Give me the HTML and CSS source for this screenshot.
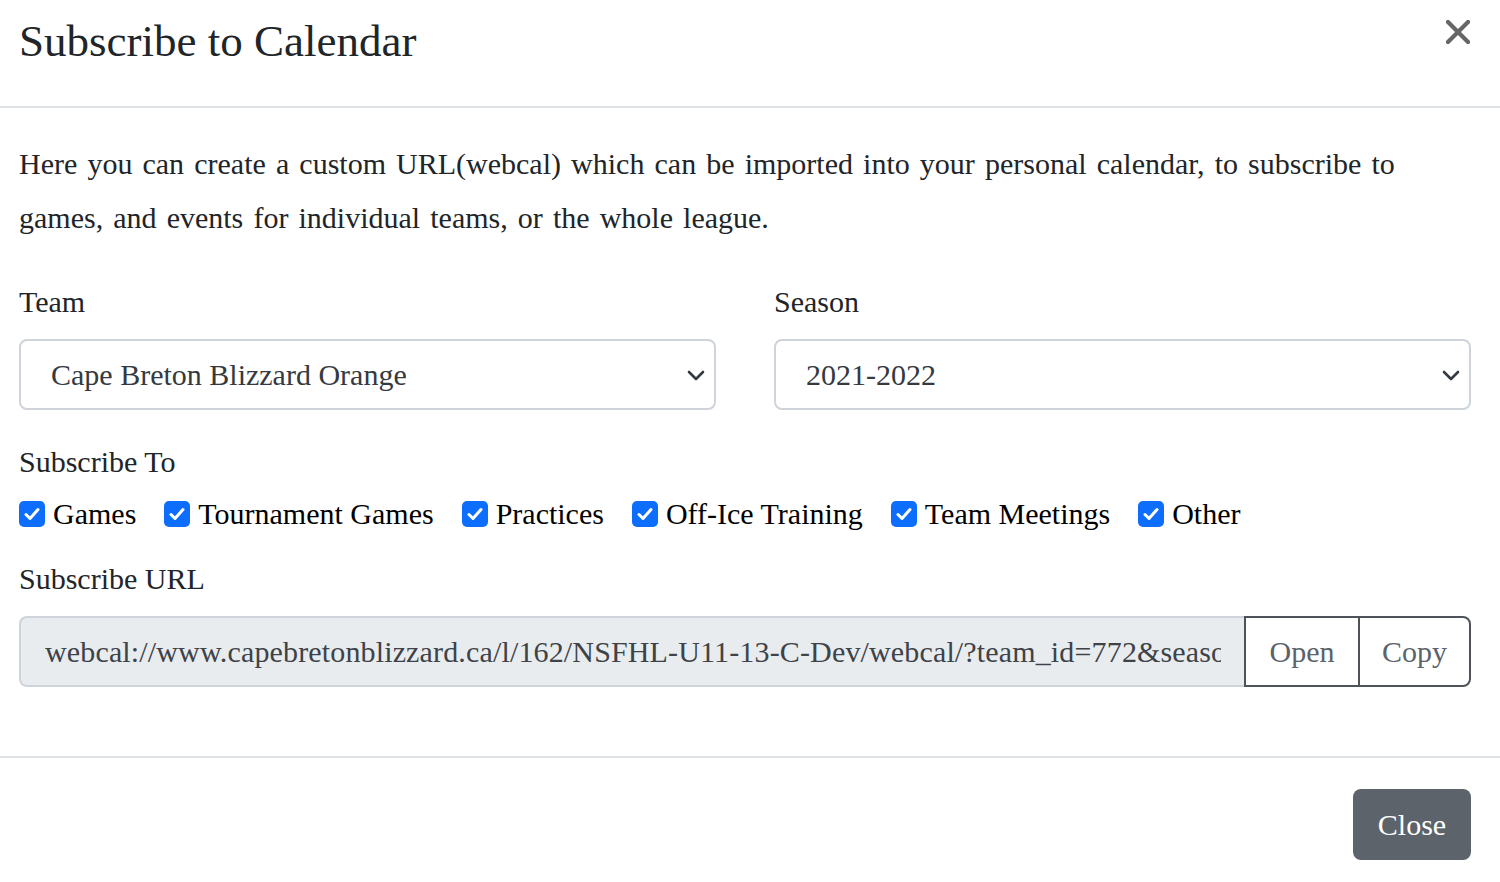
FILE: index.html
```html
<!DOCTYPE html>
<html lang="en">
<head>
    <meta charset="UTF-8">
    <title>Subscribe to Calendar</title>
    <link rel="stylesheet" href="styles.css">
</head>
<body>

    <div class="modal">
        <div class="modal-header">
            <h4 class="modal-title">Subscribe to Calendar</h4>
            <button class="btn-close" aria-label="Close">
                <svg width="24" height="24" viewBox="0 0 24 24">
                    <path d="M2 2 L22 22 M22 2 L2 22" stroke="#666" stroke-width="4.2" stroke-linecap="square"/>
                </svg>
            </button>
        </div>

        <div class="modal-body">
            <p class="intro">Here you can create a custom URL(webcal) which can be imported into your personal calendar, to subscribe to games, and events for individual teams, or the whole league.</p>

            <div class="row">
                <div class="field">
                    <label class="form-label">Team</label>
                    <div class="form-select">
                        <span>Cape Breton Blizzard Orange</span>
                        <svg class="chevron" width="18" height="11" viewBox="0 0 18 11">
                            <path d="M2 2 L9 9 L16 2" fill="none" stroke="#343a40" stroke-width="2.6" stroke-linecap="round" stroke-linejoin="round"/>
                        </svg>
                    </div>
                </div>
                <div class="field">
                    <label class="form-label">Season</label>
                    <div class="form-select">
                        <span>2021-2022</span>
                        <svg class="chevron" width="18" height="11" viewBox="0 0 18 11">
                            <path d="M2 2 L9 9 L16 2" fill="none" stroke="#343a40" stroke-width="2.6" stroke-linecap="round" stroke-linejoin="round"/>
                        </svg>
                    </div>
                </div>
            </div>

            <label class="form-label section-label">Subscribe To</label>
            <div class="checks">
                <label class="form-check"><span class="check-box"><svg width="26" height="26" viewBox="0 0 26 26"><path d="M7 13.5 L11 17.5 L19 8.5" fill="none" stroke="#fff" stroke-width="3" stroke-linecap="round" stroke-linejoin="round"/></svg></span>Games</label>
                <label class="form-check"><span class="check-box"><svg width="26" height="26" viewBox="0 0 26 26"><path d="M7 13.5 L11 17.5 L19 8.5" fill="none" stroke="#fff" stroke-width="3" stroke-linecap="round" stroke-linejoin="round"/></svg></span>Tournament Games</label>
                <label class="form-check"><span class="check-box"><svg width="26" height="26" viewBox="0 0 26 26"><path d="M7 13.5 L11 17.5 L19 8.5" fill="none" stroke="#fff" stroke-width="3" stroke-linecap="round" stroke-linejoin="round"/></svg></span>Practices</label>
                <label class="form-check"><span class="check-box"><svg width="26" height="26" viewBox="0 0 26 26"><path d="M7 13.5 L11 17.5 L19 8.5" fill="none" stroke="#fff" stroke-width="3" stroke-linecap="round" stroke-linejoin="round"/></svg></span>Off-Ice Training</label>
                <label class="form-check"><span class="check-box"><svg width="26" height="26" viewBox="0 0 26 26"><path d="M7 13.5 L11 17.5 L19 8.5" fill="none" stroke="#fff" stroke-width="3" stroke-linecap="round" stroke-linejoin="round"/></svg></span>Team Meetings</label>
                <label class="form-check"><span class="check-box"><svg width="26" height="26" viewBox="0 0 26 26"><path d="M7 13.5 L11 17.5 L19 8.5" fill="none" stroke="#fff" stroke-width="3" stroke-linecap="round" stroke-linejoin="round"/></svg></span>Other</label>
            </div>

            <label class="form-label url-label">Subscribe URL</label>
            <div class="input-group">
                <div class="url-input">
                    <span class="url-text">webcal://www.capebretonblizzard.ca/l/162/NSFHL-U11-13-C-Dev/webcal/?team_id=772&amp;season_id=2021</span>
                </div>
                <button class="btn-outline">Open</button>
                <button class="btn-outline last">Copy</button>
            </div>
        </div>

        <div class="modal-footer">
            <button class="btn-secondary">Close</button>
        </div>
    </div>

</body>
</html>
```

FILE: styles.css
```css
/* General */
body {
    margin: 0;
    background-color: #fff;
    font-family: 'Liberation Serif', 'Times New Roman', serif;
    font-size: 30px;
    color: #212529;
}

.modal {
    width: 1500px;
}

/* Header */
.modal-header {
    height: 108px;
    box-sizing: border-box;
    display: flex;
    align-items: flex-start;
    justify-content: space-between;
    padding: 0 30px 0 19px;
    border-bottom: 2px solid #dee2e6;
}

.modal-title {
    margin: 14px 0 0;
    font-size: 45px;
    font-weight: normal;
    line-height: 54px;
    color: #212529;
}

.btn-close {
    background: none;
    border: none;
    padding: 0;
    margin-top: 20px;
    cursor: pointer;
}

/* Body */
.modal-body {
    padding: 29px 29px 0 19px;
    height: 648px;
    box-sizing: border-box;
}

.intro {
    margin: 0 0 34px;
    line-height: 54px;
    word-spacing: 2.6px;
    max-width: 1410px;
}

.form-label {
    display: block;
    line-height: 45px;
}

.row {
    display: flex;
    gap: 58px;
}

.field {
    flex: 1;
}

.field .form-label {
    margin-bottom: 15px;
}

.form-select {
    height: 71px;
    box-sizing: border-box;
    border: 2px solid #ced4da;
    border-radius: 8px;
    display: flex;
    align-items: center;
    justify-content: space-between;
    padding: 0 9px 0 30px;
    color: #343a40;
}

.chevron {
    margin-top: 2px;
}

.section-label {
    margin-top: 29px;
}

/* Checkboxes */
.checks {
    display: flex;
    margin-top: 7px;
    line-height: 45px;
}

.form-check {
    display: flex;
    align-items: center;
    margin-right: 28px;
    color: #000;
}

.check-box {
    width: 26px;
    height: 26px;
    border-radius: 5px;
    background-color: #0d6efd;
    margin-right: 8px;
    display: flex;
}

.url-label {
    margin-top: 20px;
}

/* URL input group */
.input-group {
    display: flex;
    height: 71px;
    margin-top: 15px;
}

.url-input {
    flex: 1;
    min-width: 0;
    box-sizing: border-box;
    background-color: #e9ecef;
    border: 2px solid #ced4da;
    border-right: none;
    border-radius: 8px 0 0 8px;
    padding: 0 23px 0 24px;
    display: flex;
    align-items: center;
}

.url-text {
    white-space: nowrap;
    overflow: hidden;
    color: #3d4348;
    letter-spacing: 0.15px;
}

.btn-outline {
    width: 114px;
    background: #fff;
    border: 2px solid #4d5358;
    border-right: none;
    font-family: inherit;
    font-size: 30px;
    color: #5c636a;
    padding: 0;
}

.btn-outline.last {
    width: 113px;
    border-right: 2px solid #4d5358;
    border-radius: 0 8px 8px 0;
}

/* Footer */
.modal-footer {
    border-top: 2px solid #dee2e6;
    display: flex;
    justify-content: flex-end;
    padding: 31px 29px 0 0;
}

.btn-secondary {
    width: 118px;
    height: 71px;
    background-color: #5c636a;
    border: none;
    border-radius: 8px;
    color: #fff;
    font-family: inherit;
    font-size: 30px;
}
```
